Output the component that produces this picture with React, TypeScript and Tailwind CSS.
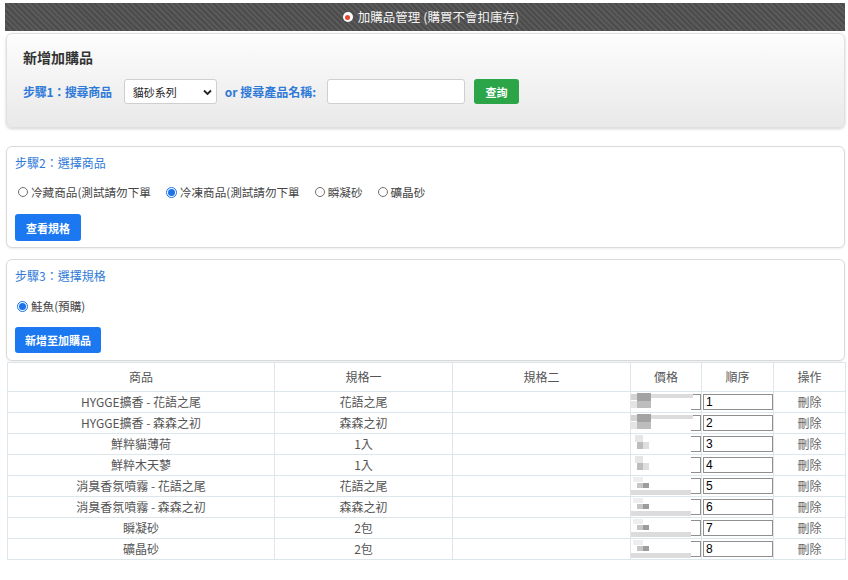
import React from "react";

const FONT = { fontFamily: '"Noto Sans CJK TC", "Noto Sans", sans-serif' };

type Row = { name: string; spec: string; order: string; mosaic: "a" | "b" | "c" };
const rows: Row[] = [
  { name: "HYGGE擴香 - 花語之尾", spec: "花語之尾", order: "1", mosaic: "a" },
  { name: "HYGGE擴香 - 森森之初", spec: "森森之初", order: "2", mosaic: "a" },
  { name: "鮮粹貓薄荷", spec: "1入", order: "3", mosaic: "b" },
  { name: "鮮粹木天蓼", spec: "1入", order: "4", mosaic: "b" },
  { name: "消臭香氛噴霧 - 花語之尾", spec: "花語之尾", order: "5", mosaic: "c" },
  { name: "消臭香氛噴霧 - 森森之初", spec: "森森之初", order: "6", mosaic: "c" },
  { name: "瞬凝砂", spec: "2包", order: "7", mosaic: "c" },
  { name: "礦晶砂", spec: "2包", order: "8", mosaic: "c" },
];

function Radio({ checked, label }: { checked?: boolean; label: string }) {
  return (
    <label className="flex items-center mr-[15px]">
      <span
        className={
          checked
            ? "w-[11px] h-[11px] rounded-full border border-[#1a73e8] flex items-center justify-center bg-white"
            : "w-[10px] h-[10px] rounded-full border border-[#6f6f6f] bg-white"
        }
      >
        {checked && <span className="w-[7px] h-[7px] rounded-full bg-[#1a73e8]" />}
      </span>
      <span className="ml-[3px] text-[11.6px] leading-[16px] text-[#444]">{label}</span>
    </label>
  );
}

function Mosaic({ kind }: { kind: "a" | "b" | "c" }) {
  if (kind === "a") {
    return (
      <div className="absolute left-0 top-0 w-[62px] h-[20px] pointer-events-none">
        <div className="absolute left-0 top-[2px] w-[6px] h-[6px] bg-[#d4d4d4]" />
        <div className="absolute left-[6px] top-[1px] w-[14px] h-[8px] bg-[#a3a3a3]" />
        <div className="absolute left-[20px] top-[2px] w-[42px] h-[4px] bg-[#dcdcdc]" />
        <div className="absolute left-0 top-[9px] w-[6px] h-[7px] bg-[#e4e4e4]" />
        <div className="absolute left-[6px] top-[9px] w-[14px] h-[7px] bg-[#bdbdbd]" />
      </div>
    );
  }
  if (kind === "b") {
    return (
      <div className="absolute left-0 top-0 w-[62px] h-[20px] pointer-events-none">
        <div className="absolute left-[4px] top-[1px] w-[8px] h-[7px] bg-[#e6e6e6]" />
        <div className="absolute left-[6px] top-[8px] w-[6px] h-[7px] bg-[#bcbcbc]" />
        <div className="absolute left-[12px] top-[8px] w-[6px] h-[7px] bg-[#dedede]" />
      </div>
    );
  }
  return (
    <div className="absolute left-0 top-0 w-[62px] h-[20px] pointer-events-none">
      <div className="absolute left-[2px] top-[1px] w-[10px] h-[5px] bg-[#eeeeee]" />
      <div className="absolute left-[6px] top-[7px] w-[6px] h-[5px] bg-[#c6c6c6]" />
      <div className="absolute left-[12px] top-[7px] w-[6px] h-[5px] bg-[#9c9c9c]" />
      <div className="absolute left-0 top-[14px] w-[60px] h-[5px] bg-[#dcdcdc]" />
    </div>
  );
}

export default function App() {
  return (
    <div className="w-[848px] h-[580px] bg-white pl-[5px] pr-[3px] pt-[3px]" style={FONT}>
      {/* header bar */}
      <div className="h-[28px] flex items-center justify-center pl-[12px] bg-[repeating-linear-gradient(45deg,#5a5a5a_0px,#5a5a5a_2px,#4c4c4c_2px,#4c4c4c_4px)]">
        <span className="w-[10px] h-[10px] rounded-full bg-white flex items-center justify-center mr-[5px]">
          <span className="w-[5px] h-[5px] rounded-full bg-[#e8452c]" />
        </span>
        <span className="text-[12.5px] leading-[16px] text-[#f2f2f2]">加購品管理 (購買不會扣庫存)</span>
      </div>

      {/* panel 1 */}
      <div className="mt-[2px] ml-[1px] h-[95px] rounded-[6px] border border-[#e0e0e0] bg-linear-to-b from-[#fdfdfd] to-[#e9e9e9] shadow-[0_1px_3px_rgba(0,0,0,0.18)] pl-[16px] pt-[13px]">
        <div className="text-[14px] leading-[20px] font-bold text-[#333]">新增加購品</div>
        <div className="mt-[12px] flex items-center h-[25px]">
          <span className="text-[12px] font-bold text-[#2f7ad8] leading-[16px] tracking-[-0.3px]">步驟1：搜尋商品</span>
          <div className="relative ml-[12px] w-[93px] h-[25px] rounded-[3px] border border-[#cfcfcf] bg-white flex items-center pl-[8px]">
            <span className="text-[11px] text-[#222] leading-[14px]">貓砂系列</span>
            <svg className="absolute right-[4px] top-[9px]" width="9" height="7" viewBox="0 0 9 7">
              <path d="M1 1.5 L4.5 5 L8 1.5" fill="none" stroke="#222" strokeWidth="1.8" />
            </svg>
          </div>
          <span className="ml-[8px] text-[12px] font-bold text-[#2f7ad8] leading-[16px]">or 搜尋產品名稱:</span>
          <div className="ml-[11px] w-[138px] h-[25px] rounded-[3px] border border-[#cfcfcf] bg-white" />
          <button className="ml-[9px] w-[45px] h-[25px] rounded-[3px] bg-[#2ba548] text-white text-[11px] font-bold leading-[14px]">
            查詢
          </button>
        </div>
      </div>

      {/* panel 2 */}
      <div className="mt-[18px] ml-[1px] h-[102px] rounded-[6px] border border-[#dadada] bg-white shadow-[0_1px_2px_rgba(0,0,0,0.08)] pl-[8px] pt-[7px]">
        <div className="text-[12px] leading-[18px] text-[#2f7ad8]">步驟2：選擇商品</div>
        <div className="mt-[12px] flex items-center h-[16px] pl-[3px]">
          <Radio label="冷藏商品(測試請勿下單" />
          <Radio checked label="冷凍商品(測試請勿下單" />
          <Radio label="瞬凝砂" />
          <Radio label="礦晶砂" />
        </div>
        <button className="mt-[14px] w-[66px] h-[27px] rounded-[3px] bg-[#1b78f0] text-white text-[11px] font-bold leading-[14px]">
          查看規格
        </button>
      </div>

      {/* panel 3 */}
      <div className="mt-[11px] ml-[1px] h-[102px] rounded-[6px] border border-[#dadada] bg-white shadow-[0_1px_2px_rgba(0,0,0,0.08)] pl-[8px] pt-[7px]">
        <div className="text-[12px] leading-[18px] text-[#2f7ad8]">步驟3：選擇規格</div>
        <div className="mt-[13px] flex items-center h-[16px] pl-[2px]">
          <Radio checked label="鮭魚(預購)" />
        </div>
        <button className="mt-[13px] w-[86px] h-[26px] rounded-[3px] bg-[#1b78f0] text-white text-[11px] font-bold leading-[14px]">
          新增至加購品
        </button>
      </div>

      {/* table */}
      <table className="ml-[2px] mt-[1px] w-[838px] border-collapse table-fixed text-[12px] text-[#555]">
        <colgroup>
          <col className="w-[267px]" />
          <col className="w-[178px]" />
          <col className="w-[178px]" />
          <col className="w-[71px]" />
          <col className="w-[72px]" />
          <col className="w-[72px]" />
        </colgroup>
        <thead>
          <tr className="h-[29px]">
            {["商品", "規格一", "規格二", "價格", "順序", "操作"].map((h) => (
              <th key={h} className="border border-[#dde7eb] font-normal text-center leading-[16px] p-0">
                {h}
              </th>
            ))}
          </tr>
        </thead>
        <tbody>
          {rows.map((r) => (
            <tr key={r.order} className="h-[21px]">
              <td className="border border-[#dde7eb] text-center leading-[16px] p-0">{r.name}</td>
              <td className="border border-[#dde7eb] text-center leading-[16px] p-0">{r.spec}</td>
              <td className="border border-[#dde7eb] p-0" />
              <td className="border border-[#dde7eb] p-0">
                <div className="relative h-[20px] flex items-center justify-end">
                  <div className="w-[10px] h-[16px] border border-[#8f8f8f] border-l-0 bg-white" />
                  <Mosaic kind={r.mosaic} />
                </div>
              </td>
              <td className="border border-[#dde7eb] p-0">
                <div className="h-[20px] flex items-center pl-[1px]">
                  <div className="w-[70px] h-[16px] border border-[#8f8f8f] bg-white text-[12px] text-black leading-[14px] pl-[2px] font-[Liberation_Sans]">
                    {r.order}
                  </div>
                </div>
              </td>
              <td className="border border-[#dde7eb] text-center leading-[16px] p-0 text-[#666]">刪除</td>
            </tr>
          ))}
        </tbody>
      </table>
    </div>
  );
}
